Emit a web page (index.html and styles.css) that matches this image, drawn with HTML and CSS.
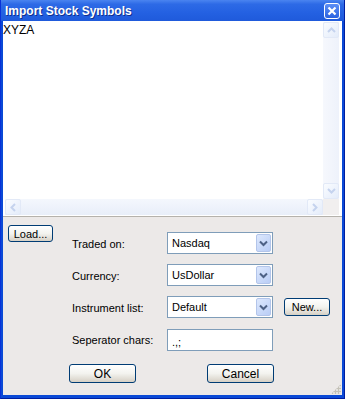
FILE: index.html
```html
<!DOCTYPE html>
<html lang="en">
<head>
  <meta charset="UTF-8">
  <title>Import Stock Symbols</title>
  <link rel="stylesheet" href="styles.css">
</head>
<body>
  <div class="window">
    <!-- title bar -->
    <div class="titlebar">
      <span class="title">Import Stock Symbols</span>
      <span class="close">
        <svg width="10" height="10" viewBox="0 0 10 10"><path d="M1.5 1.5 L8.5 8.5 M8.5 1.5 L1.5 8.5" stroke="#fff" stroke-width="2.2"/></svg>
      </span>
    </div>

    <!-- symbol text box -->
    <div class="editor">
      <div class="text">XYZA</div>
      <div class="vscroll">
        <span class="sbtn">
          <svg width="9" height="6" viewBox="0 0 9 6"><path d="M1 5 L4.5 1.5 L8 5" fill="none" stroke="#c5d3ee" stroke-width="2"/></svg>
        </span>
        <span class="sbtn">
          <svg width="9" height="6" viewBox="0 0 9 6"><path d="M1 1 L4.5 4.5 L8 1" fill="none" stroke="#c5d3ee" stroke-width="2"/></svg>
        </span>
      </div>
      <div class="hscroll">
        <span class="sbtn">
          <svg width="6" height="9" viewBox="0 0 6 9"><path d="M5 1 L1.5 4.5 L5 8" fill="none" stroke="#c5d3ee" stroke-width="2"/></svg>
        </span>
        <span class="sbtn">
          <svg width="6" height="9" viewBox="0 0 6 9"><path d="M1 1 L4.5 4.5 L1 8" fill="none" stroke="#c5d3ee" stroke-width="2"/></svg>
        </span>
      </div>
      <div class="corner"></div>
    </div>

    <!-- options -->
    <div class="panel">
      <div class="top">
        <button class="btn load">Load...</button>
        <div class="fields">
          <label>Traded on:</label>
          <div class="combo">Nasdaq<span class="arrow"><svg width="9" height="7" viewBox="0 0 9 7"><path d="M1 1.5 L4.5 5 L8 1.5" fill="none" stroke="#4d6185" stroke-width="2"/></svg></span></div>
          <span></span>

          <label>Currency:</label>
          <div class="combo">UsDollar<span class="arrow"><svg width="9" height="7" viewBox="0 0 9 7"><path d="M1 1.5 L4.5 5 L8 1.5" fill="none" stroke="#4d6185" stroke-width="2"/></svg></span></div>
          <span></span>

          <label>Instrument list:</label>
          <div class="combo">Default<span class="arrow"><svg width="9" height="7" viewBox="0 0 9 7"><path d="M1 1.5 L4.5 5 L8 1.5" fill="none" stroke="#4d6185" stroke-width="2"/></svg></span></div>
          <button class="btn new">New...</button>

          <label>Seperator chars:</label>
          <div class="entry">.,;</div>
          <span></span>
        </div>
      </div>
      <div class="actions">
        <button class="btn wide">OK</button>
        <button class="btn wide">Cancel</button>
      </div>
      <span class="grip"></span>
    </div>
  </div>
</body>
</html>
```

FILE: styles.css
```css
body {
  margin: 0;
  font-family: "Liberation Sans", Arial, sans-serif;
  font-size: 11px;
  color: #000;
}
.window {
  width: 345px;
  height: 399px;
  box-sizing: border-box;
  display: flex;
  flex-direction: column;
  background: #0a49d6;
  border-left: 1px solid #0831d9;
  border-right: 1px solid #001ea0;
  border-bottom: 1px solid #001ea0;
  padding: 0 2px 3px 2px;
}
.titlebar {
  height: 21px;
  margin: 0 -2px;
  padding: 0 4px 0 4px;
  display: flex;
  align-items: center;
  justify-content: space-between;
  background: linear-gradient(#4a84f0 0%, #2d6ae6 20%, #2461e2 60%, #1f5adb 100%);
}
.title {
  color: #fff;
  font-weight: bold;
  font-size: 12px;
  text-shadow: 1px 1px 0 #0f2f8f;
}
.close {
  width: 14px;
  height: 14px;
  border: 1px solid #fff;
  border-radius: 3px;
  background: linear-gradient(#5d8ff5, #2a62e0);
  display: flex;
  align-items: center;
  justify-content: center;
}
.editor {
  height: 196px;
  box-sizing: border-box;
  background: #fff;
  display: grid;
  grid-template-columns: 1fr 16px;
  grid-template-rows: 1fr 16px;
  padding: 1px 3px 1px 2px;
  border-bottom: 1px solid #b5b2ac;
}
.text {
  margin-left: -2px;
  font-size: 12px;
  padding-top: 1px;
}
.vscroll {
  display: flex;
  flex-direction: column;
  justify-content: space-between;
  background: linear-gradient(to right, #f6f8fd, #eef2fb);
}
.hscroll {
  display: flex;
  justify-content: space-between;
  background: linear-gradient(#f4f7fd, #e8eef9);
}
.corner {
  background: #f1efef;
}
.sbtn {
  width: 16px;
  height: 16px;
  box-sizing: border-box;
  border: 1px solid #e2e9f7;
  border-radius: 2px;
  background: linear-gradient(135deg, #fafcff, #e4ecfa);
  display: flex;
  align-items: center;
  justify-content: center;
}
.panel {
  flex: 1;
  position: relative;
  background: #ece9e8;
  display: flex;
  flex-direction: column;
  padding: 8px 0 0 5px;
}
.top {
  display: flex;
}
.btn {
  font-family: inherit;
  font-size: 11px;
  height: 17px;
  padding: 0 4px;
  border: 1px solid #003c74;
  border-radius: 3px;
  background: linear-gradient(#ffffff 0%, #f3f3ef 50%, #d6d0c5 100%);
  color: #000;
  line-height: 14px;
}
.load {
  width: 45px;
}
.fields {
  margin: 7px 0 0 19px;
  display: grid;
  grid-template-columns: 95px 106px 57px;
  grid-auto-rows: 22px;
  row-gap: 10px;
  align-items: center;
}
.fields label {
  padding-top: 2px;
}
.combo, .entry {
  height: 22px;
  box-sizing: border-box;
  border: 1px solid #7f9db9;
  background: #fff;
  padding: 0 0 0 4px;
  display: flex;
  align-items: center;
  justify-content: space-between;
}
.combo .arrow {
  width: 15px;
  height: 18px;
  margin-right: 1px;
  box-sizing: border-box;
  border: 1px solid #b3c5ea;
  border-radius: 2px;
  background: linear-gradient(135deg, #dde8fd, #b9cdf6);
  display: flex;
  align-items: center;
  justify-content: center;
}
.entry {
  margin-top: 2px;
  padding-top: 4px;
}
.new {
  width: 46px;
  height: 18px;
  margin-left: 11px;
}
.actions {
  display: flex;
  gap: 71px;
  padding-left: 61px;
  margin-top: 14px;
}
.wide {
  width: 67px;
  height: 19px;
  font-size: 12px;
}
.grip {
  position: absolute;
  right: 1px;
  bottom: 1px;
  width: 10px;
  height: 10px;
  background: radial-gradient(circle, #c5c2b8 1px, transparent 1.5px) 0 0 / 3px 3px;
  clip-path: polygon(100% 0, 100% 100%, 0 100%);
}
```
